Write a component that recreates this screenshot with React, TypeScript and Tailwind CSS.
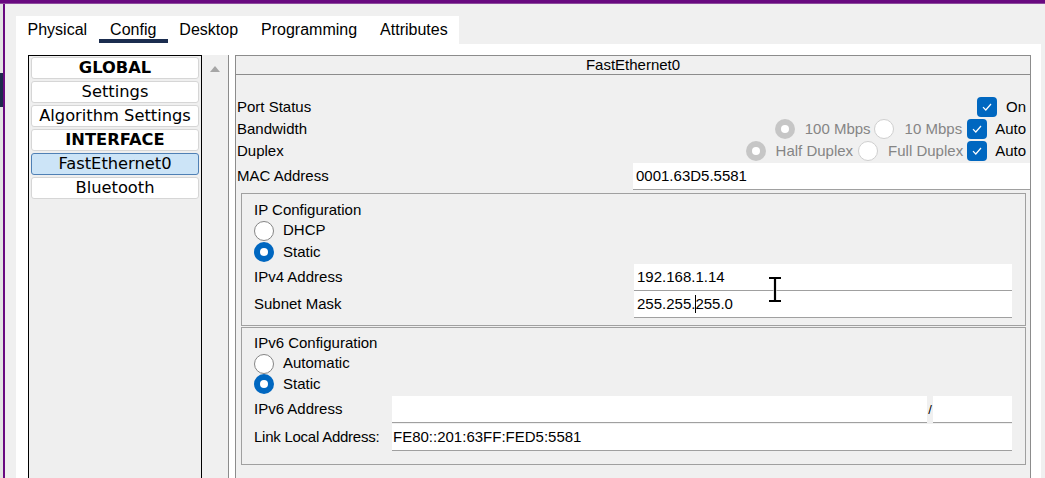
import React from "react";

type RadioKind = "on" | "off" | "disabledOn" | "disabledOff";

const Radio = ({ kind }: { kind: RadioKind }) => {
  if (kind === "on" || kind === "disabledOn") {
    return (
      <span
        className={
          "flex h-5 w-5 shrink-0 items-center justify-center rounded-full " +
          (kind === "on" ? "bg-[#0067c0]" : "bg-[#c6c6c6]")
        }
      >
        <span className="h-[8px] w-[8px] rounded-full bg-white" />
      </span>
    );
  }
  return (
    <span
      className={
        "h-5 w-5 shrink-0 rounded-full border bg-white " +
        (kind === "off" ? "border-[#858585]" : "border-[#cfcfcf]")
      }
    />
  );
};

const Check = () => (
  <span className="flex h-5 w-5 shrink-0 items-center justify-center rounded-[4px] bg-[#0067c0]">
    <svg width="10" height="8" viewBox="0 0 10 8" fill="none">
      <path d="M1 4.2 L3.8 7 L9 1" stroke="white" strokeWidth="1.2" />
    </svg>
  </span>
);

const Field = ({ children, className = "" }: { children?: React.ReactNode; className?: string }) => (
  <div className={"flex h-[27px] items-center border-b border-[#a0a0a0] bg-white pl-[3px] " + className}>
    {children}
  </div>
);

const tabs = ["Physical", "Config", "Desktop", "Programming", "Attributes"];

const listItems = [
  { label: "GLOBAL", bold: true },
  { label: "Settings" },
  { label: "Algorithm Settings" },
  { label: "INTERFACE", bold: true },
  { label: "FastEthernet0", selected: true },
  { label: "Bluetooth" },
];

export default function App() {
  return (
    <div className="relative flex h-[478px] w-[1045px] flex-col overflow-hidden bg-[#f0f0f0] font-['Liberation_Sans',Arial,sans-serif] text-[15px] text-black">
      <div className="h-[4px] shrink-0 border-b border-[#8d4a9e] bg-[#690a80]" />
      <div className="flex min-h-0 flex-1">
        <div className="flex w-[3px] shrink-0 flex-col bg-[#e4e4e4]">
          <div className="h-[69px]" />
          <div className="h-[34px] bg-[#1d2b4c]" />
        </div>
        <div className="w-[2px] shrink-0 bg-[#690a80]" />

        <div className="flex min-w-0 flex-1 flex-col pl-[11px] pt-[12px]">
          {/* tabs */}
          <div className="flex h-[28px] w-fit bg-white text-[16px]">
            {tabs.map((t) => (
              <div key={t} className="relative flex items-center px-[11.5px]">
                {t}
                {t === "Config" && (
                  <div className="absolute bottom-[1px] left-0 right-0 h-[4px] bg-[#1b2d4f]" />
                )}
              </div>
            ))}
          </div>

          {/* tab body */}
          <div className="mr-[4px] flex min-h-0 flex-1 bg-white pl-[12px] pr-[10px] pt-[11px]">
            <div className="flex w-[174px] shrink-0 flex-col gap-[2px] border border-b-0 border-black bg-[#efefef] px-[2px] pt-[1px] font-['DejaVu_Sans',sans-serif] text-[16.3px]">
              {listItems.map((it) => (
                <div
                  key={it.label}
                  className={
                    "h-[22px] rounded-[3px] border text-center leading-[20px] " +
                    (it.selected ? "border-[#4f80b5] bg-[#cce4f7] " : "border-[#d6d6d6] bg-white ") +
                    (it.bold ? "font-bold" : "")
                  }
                >
                  {it.label}
                </div>
              ))}
            </div>
            <div className="flex w-[27px] shrink-0 justify-center border-r border-[#8c8c8c] bg-[#f0f0f0] pt-[11px]">
              <svg width="10" height="6" viewBox="0 0 10 6">
                <path d="M5 0 L10 6 L0 6 Z" fill="#a6a6a6" />
              </svg>
            </div>

            {/* interface panel */}
            <div className="ml-[6px] flex min-w-0 flex-1 flex-col border border-b-0 border-[#8c8c8c] bg-[#f0f0f0]">
              <div className="h-[19px] border-b border-[#8c8c8c] text-center leading-[18px]">FastEthernet0</div>

              <div className="mt-[21px] flex h-[22px] items-center justify-between pl-[1px] pr-[4px]">
                <span>Port Status</span>
                <div className="flex items-center gap-[9px]">
                  <Check />
                  <span>On</span>
                </div>
              </div>
              <div className="flex h-[22px] items-center justify-between pl-[1px] pr-[4px]">
                <span>Bandwidth</span>
                <div className="flex items-center">
                  <div className="flex items-center gap-[10px]">
                    <Radio kind="disabledOn" />
                    <span className="text-[#858585]">100 Mbps</span>
                  </div>
                  <div className="ml-[3px] flex items-center gap-[11px]">
                    <Radio kind="disabledOff" />
                    <span className="text-[#858585]">10 Mbps</span>
                  </div>
                  <div className="ml-[5px] flex items-center gap-[8px]">
                    <Check />
                    <span>Auto</span>
                  </div>
                </div>
              </div>
              <div className="flex h-[22px] items-center justify-between pl-[1px] pr-[4px]">
                <span>Duplex</span>
                <div className="flex items-center">
                  <div className="flex items-center gap-[10px]">
                    <Radio kind="disabledOn" />
                    <span className="text-[#858585]">Half Duplex</span>
                  </div>
                  <div className="ml-[5px] flex items-center gap-[10px]">
                    <Radio kind="disabledOff" />
                    <span className="text-[#858585]">Full Duplex</span>
                  </div>
                  <div className="ml-[4px] flex items-center gap-[8px]">
                    <Check />
                    <span>Auto</span>
                  </div>
                </div>
              </div>
              <div className="mt-[1px] flex h-[27px] items-center pl-[1px]">
                <span>MAC Address</span>
                <Field className="ml-auto h-full w-[397px]">0001.63D5.5581</Field>
              </div>

              {/* IPv4 */}
              <div className="ml-[5px] mr-[4px] mt-[3px] flex flex-col border border-[#a0a0a0] pb-[7px] pl-[12px] pr-[13px] pt-[6px]">
                <div className="flex h-[20px] items-center">IP Configuration</div>
                <div className="flex h-[21px] items-center gap-[9px]">
                  <Radio kind="off" />
                  <span>DHCP</span>
                </div>
                <div className="flex h-[22px] items-center gap-[9px]">
                  <Radio kind="on" />
                  <span>Static</span>
                </div>
                <div className="mt-[1px] flex h-[27px] items-center">
                  <span>IPv4 Address</span>
                  <Field className="ml-auto w-[378px]">192.168.1.14</Field>
                </div>
                <div className="flex h-[27px] items-center">
                  <span>Subnet Mask</span>
                  <Field className="ml-auto w-[378px]">
                    255.255.
                    <span className="mx-[-0.5px] inline-block h-[18px] w-px bg-black" />
                    255.0
                  </Field>
                </div>
              </div>

              {/* IPv6 */}
              <div className="ml-[5px] mr-[4px] mt-[1px] flex flex-col border border-[#a0a0a0] pb-[13px] pl-[12px] pr-[13px] pt-[5px]">
                <div className="flex h-[20px] items-center">IPv6 Configuration</div>
                <div className="flex h-[21px] items-center gap-[9px]">
                  <Radio kind="off" />
                  <span>Automatic</span>
                </div>
                <div className="flex h-[20px] items-center gap-[9px]">
                  <Radio kind="on" />
                  <span>Static</span>
                </div>
                <div className="mt-[2px] flex h-[27px] items-center">
                  <span className="w-[138px] shrink-0">IPv6 Address</span>
                  <Field className="w-[535px] shrink-0" />
                  <span className="w-[6px] shrink-0 text-center text-[13px]">/</span>
                  <Field className="min-w-0 flex-1" />
                </div>
                <div className="mt-[1px] flex h-[27px] items-center">
                  <span className="w-[138px] shrink-0 whitespace-nowrap tracking-[-0.25px]">Link Local Address:</span>
                  <Field className="min-w-0 flex-1 !pl-[1px]">FE80::201:63FF:FED5:5581</Field>
                </div>
              </div>
            </div>
          </div>
        </div>
      </div>

      {/* mouse I-beam over the subnet field */}
      <svg className="absolute left-[767px] top-[276px]" width="16" height="27" viewBox="0 0 16 27">
        <path d="M2 2 H14 M2 25 H14 M8 2 V25" stroke="#ffffff" strokeWidth="4" opacity="0.5" />
        <path d="M2 2 H14 M2 25 H14 M8 2 V25" stroke="#000000" strokeWidth="2.2" />
      </svg>
    </div>
  );
}
